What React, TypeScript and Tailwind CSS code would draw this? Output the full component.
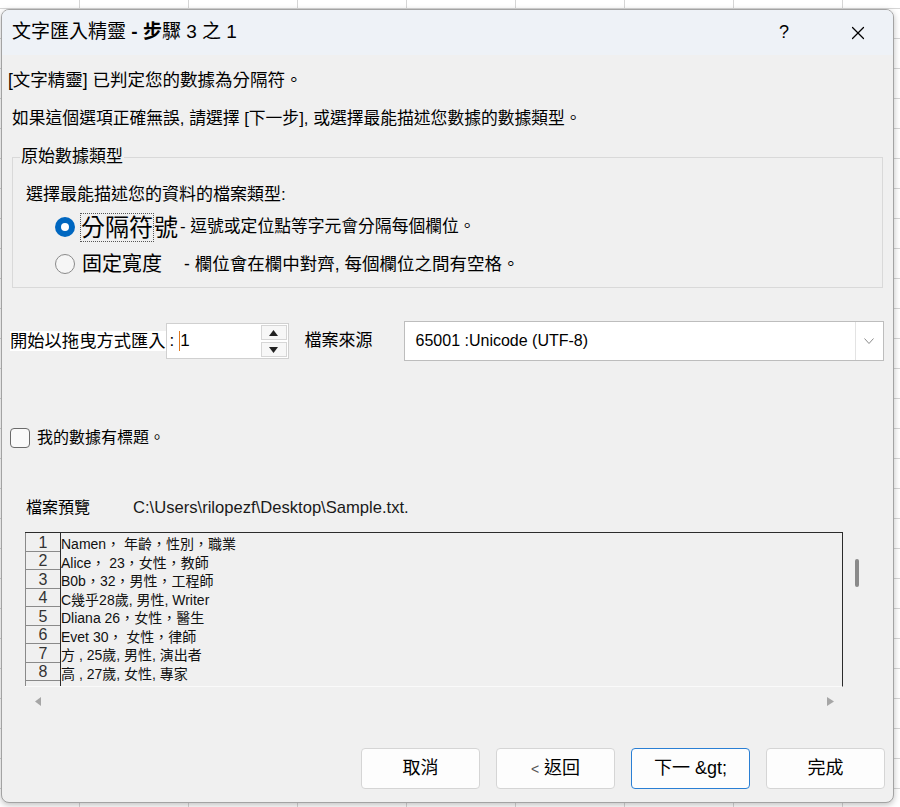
import { X } from "lucide-react";

const rows = [
  "Namen， 年齡，性別，職業",
  "Alice， 23，女性，教師",
  "B0b，32，男性，工程師",
  "C幾乎28歲, 男性, Writer",
  "Dliana 26，女性，醫生",
  "Evet 30， 女性，律師",
  "方 , 25歲, 男性, 演出者",
  "高 , 27歲, 女性, 專家",
];

const font = "font-['Liberation_Sans','Noto_Sans_CJK_TC',sans-serif]";

const Button = ({ label, primary }: { label: React.ReactNode; primary?: boolean }) => (
  <button
    className={`flex h-[41px] w-[119px] items-center justify-center rounded-[4px] border bg-[#fdfdfd] text-[18px] text-black ${
      primary ? "border-[#2a7fd4]" : "border-[#d5d5d5]"
    }`}
  >
    {label}
  </button>
);

export default function App() {
  return (
    <div
      className={`h-[807px] w-[900px] overflow-hidden bg-white bg-[linear-gradient(to_right,#d6d6d6_1px,transparent_1px),linear-gradient(to_bottom,#d6d6d6_1px,transparent_1px)] bg-[size:109px_30px] bg-[position:79px_8px] pl-[1px] pt-[9px] ${font}`}
    >
      <div className="flex h-[794px] w-[893px] flex-col overflow-hidden rounded-[8px] border border-[#a3a3a3] bg-[#f0f0f0] text-black shadow-[0_2px_6px_rgba(0,0,0,0.25)]">
        {/* title bar */}
        <div className="flex h-[45px] shrink-0 items-center bg-[#eef2f7] pl-[10px] text-[19px]">
          <span>
            文字匯入精靈 <span className="font-bold">- 步</span>驟 3 之 1
          </span>
          <span className="ml-auto mr-[58px] text-[18px]">?</span>
          <X className="mr-[24px] h-[22px] w-[22px]" strokeWidth={1.3} />
        </div>

        <div className="mt-[13px] h-[24px] pl-[6px] text-[17.5px] leading-[24px]">[文字精靈] 已判定您的數據為分隔符。</div>
        <div className="mt-[15px] h-[24px] pl-[10px] text-[16.8px] leading-[24px]">
          如果這個選項正確無誤, 請選擇 [下一步], 或選擇最能描述您數據的數據類型。
        </div>

        <fieldset className="ml-[10px] mt-[14px] h-[143px] w-[871px] border border-[#d9d9d9]">
          <legend className="ml-[7px] h-[24px] px-[1px] text-[17px] leading-[24px]">原始數據類型</legend>
          <div className="ml-[13px] mt-[14px] h-[24px] text-[17px] leading-[24px]">選擇最能描述您的資料的檔案類型:</div>
          <div className="mt-[5px] flex h-[30px] items-center">
            <span className="ml-[42px] flex h-[20px] w-[20px] items-center justify-center rounded-full bg-[#0067c0]">
              <span className="h-[8px] w-[8px] rounded-full bg-white" />
            </span>
            <span className="ml-[5px] text-[24px] leading-[27px]">
              <span className="border border-dotted border-[#555]">分隔符</span>號
            </span>
            <span className="ml-[2px] text-[16.8px]">- 逗號或定位點等字元會分隔每個欄位。</span>
          </div>
          <div className="mt-[8px] flex h-[28px] items-center">
            <span className="ml-[42px] h-[20px] w-[20px] rounded-full border border-[#8a8a8a] bg-[#f6f6f6]" />
            <span className="ml-[7px] w-[102px] text-[20px]">固定寬度</span>
            <span className="text-[17.5px]">- 欄位會在欄中對齊, 每個欄位之間有空格。</span>
          </div>
        </fieldset>

        {/* start row / origin */}
        <div className="mt-[33px] flex h-[40px] items-center">
          <span className="ml-[8px] h-[20px] bg-white text-[17.3px] leading-[20px]">開始以拖曳方式匯入</span>
          <div className="flex h-[36px] w-[123px] items-center border border-[#d0d0d0] bg-white">
            <span className="ml-[3px] text-[17px]">:</span>
            <span className="ml-[5px] border-l border-[#e07a1f] text-[17px] leading-[20px]">1</span>
            <div className="ml-auto mr-[1px] flex h-[32px] w-[26px] flex-col gap-[2px]">
              <div className="flex flex-1 items-center justify-center border border-[#d6d6d6] bg-[#f7f7f7]">
                <svg width="9" height="6" viewBox="0 0 9 6">
                  <path d="M4.5 0L9 6H0z" fill="#222" />
                </svg>
              </div>
              <div className="flex flex-1 items-center justify-center border border-[#d6d6d6] bg-[#f7f7f7]">
                <svg width="9" height="6" viewBox="0 0 9 6">
                  <path d="M0 0h9L4.5 6z" fill="#222" />
                </svg>
              </div>
            </div>
          </div>
          <span className="ml-[16px] w-[99px] text-[17px]">檔案來源</span>
          <div className="flex h-[40px] w-[480px] items-center border border-[#bdbdbd] bg-white">
            <span className="ml-[11px] text-[16px]">65001 :Unicode (UTF-8)</span>
            <div className="ml-auto flex h-[38px] w-[28px] items-center justify-center border-l border-[#e3e3e3]">
              <svg width="10" height="6" viewBox="0 0 10 6">
                <path d="M0.5 0.5L5 5.5L9.5 0.5" fill="none" stroke="#8a8a8a" strokeWidth="1" />
              </svg>
            </div>
          </div>
        </div>

        <div className="mt-[67px] flex h-[20px] items-center">
          <span className="ml-[8px] h-[20px] w-[20px] rounded-[4px] border border-[#6b6b6b] bg-[#fafafa]" />
          <span className="ml-[7px] text-[16px]">我的數據有標題。</span>
        </div>

        <div className="mt-[48px] flex h-[24px] items-center">
          <span className="ml-[24px] w-[107px] text-[16px]">檔案預覽</span>
          <span className="text-[16.6px] text-[#1a1a1a]">C:\Users\rilopezf\Desktop\Sample.txt.</span>
        </div>

        {/* preview */}
        <div className="mt-[12px] flex">
          <div className="ml-[23px] h-[155px] w-[818px] overflow-hidden border-b border-r border-t border-b-[#fafafa] border-r-[#2b2b2b] border-t-[#2b2b2b]">
            <div className="flex h-full">
              <div className="w-[36px] shrink-0 border-l border-r border-l-[#8a8a8a] border-r-[#2b2b2b]">
                {rows.map((_, i) => (
                  <div
                    key={i}
                    className="flex h-[18.5px] items-end justify-center border-b border-[#8a8a8a] text-[16px] leading-[17px] text-[#333]"
                  >
                    {i + 1}
                  </div>
                ))}
              </div>
              <div className="pt-[2px]">
                {rows.map((r, i) => (
                  <div key={i} className="h-[18.5px] whitespace-pre text-[14px] leading-[18px] text-[#111]">
                    {r}
                  </div>
                ))}
              </div>
            </div>
          </div>
          <div className="ml-[12px] mt-[27px] h-[28px] w-[4px] rounded-full bg-[#8a8a8a]" />
        </div>

        <div className="mt-[10px] flex h-[9px] items-center">
          <svg className="ml-[33px]" width="6" height="9" viewBox="0 0 6 9">
            <path d="M6 0V9L0 4.5z" fill="#a6a6a6" />
          </svg>
          <svg className="ml-[786px]" width="7" height="9" viewBox="0 0 7 9">
            <path d="M0 0V9L7 4.5z" fill="#a6a6a6" />
          </svg>
        </div>

        <div className="mt-[42px] flex justify-end gap-[16px] pr-[8px]">
          <Button label="取消" />
          <Button
            label={
              <span>
                <span className="text-[14px] text-[#555]">&lt;</span> 返回
              </span>
            }
          />
          <Button label={"下一 &gt;"} primary />
          <Button label="完成" />
        </div>
      </div>
    </div>
  );
}
